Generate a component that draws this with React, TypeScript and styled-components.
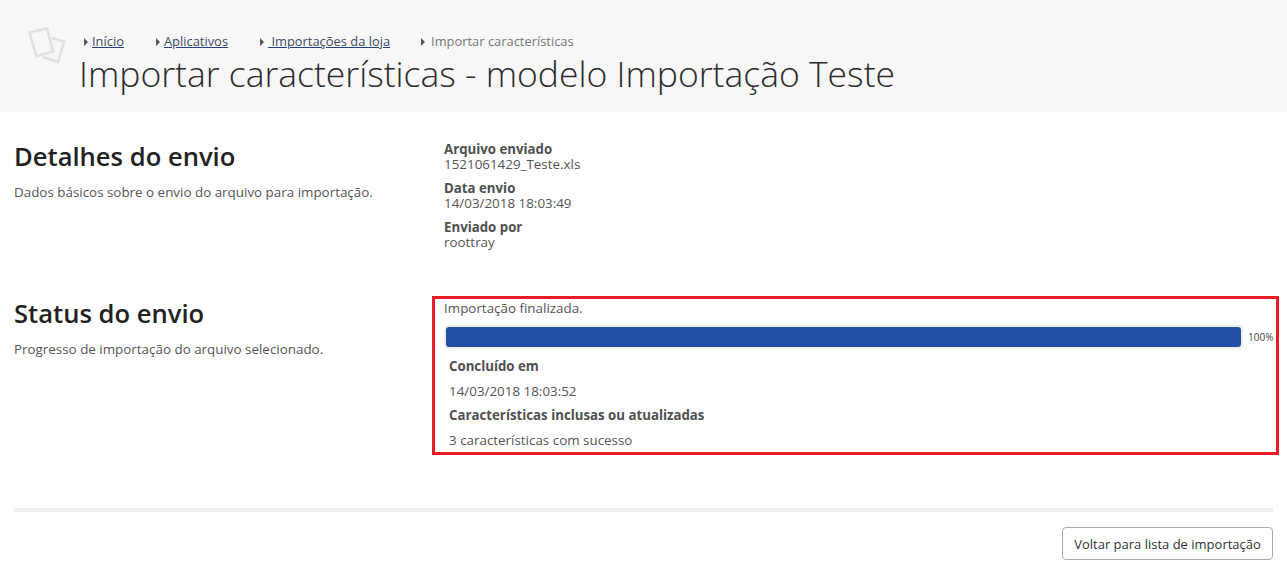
import styled, { createGlobalStyle } from 'styled-components';

const GlobalStyle = createGlobalStyle`
  html, body {
    margin: 0;
    padding: 0;
    background: #fff;
    font-family: 'Open Sans', 'Noto Sans', sans-serif;
    color: #555;
  }
`;

const crumbs = [
  { label: 'Início', gap: 32 },
  { label: 'Aplicativos', gap: 32 },
  { label: ' Importações da loja', gap: 31 },
];

const App = () => (
  <Page>
    <GlobalStyle />
    <Header>
      <PageIcon width="40" height="40" viewBox="0 0 40 40" fill="none">
        <path d="M2.5 6.5 20 2.5 26 25.5 9.5 30.5Z" stroke="#e0e0e0" strokeWidth="2.5" />
        <path d="M25 12 37 15.5 31 36 16 31" stroke="#e0e0e0" strokeWidth="2.5" />
      </PageIcon>
      <Breadcrumb>
        {crumbs.map(crumb => (
          <Crumb key={crumb.label} $gap={crumb.gap}>
            <Arrow />
            <CrumbLink href="#">{crumb.label}</CrumbLink>
          </Crumb>
        ))}
        <Crumb $gap={0}>
          <Arrow />
          <CurrentCrumb>Importar características</CurrentCrumb>
        </Crumb>
      </Breadcrumb>
      <Title>Importar características - modelo Importação Teste</Title>
    </Header>

    <Section $height={157}>
      <Intro>
        <SectionTitle>Detalhes do envio</SectionTitle>
        <SectionText>Dados básicos sobre o envio do arquivo para importação.</SectionText>
      </Intro>
      <Details>
        <DetailLabel>Arquivo enviado</DetailLabel>
        <DetailValue>1521061429_Teste.xls</DetailValue>
        <DetailLabel>Data envio</DetailLabel>
        <DetailValue>14/03/2018 18:03:49</DetailValue>
        <DetailLabel>Enviado por</DetailLabel>
        <DetailValue>roottray</DetailValue>
      </Details>
    </Section>

    <Section $height={159}>
      <Intro>
        <SectionTitle>Status do envio</SectionTitle>
        <SectionText>Progresso de importação do arquivo selecionado.</SectionText>
      </Intro>
      <StatusBox>
        <StatusText>Importação finalizada.</StatusText>
        <ProgressRow>
          <ProgressTrack>
            <ProgressFill style={{ width: '100%' }} />
          </ProgressTrack>
          <ProgressValue>100%</ProgressValue>
        </ProgressRow>
        <ResultLine $bold>Concluído em</ResultLine>
        <ResultLine>14/03/2018 18:03:52</ResultLine>
        <ResultLine $bold>Características inclusas ou atualizadas</ResultLine>
        <ResultLine>3 características com sucesso</ResultLine>
      </StatusBox>
    </Section>

    <Footer>
      <BackButton type="button">Voltar para lista de importação</BackButton>
    </Footer>
  </Page>
);

const Page = styled.div`
  width: 1287px;
  height: 569px;
  overflow: hidden;
`;

const Header = styled.header`
  position: relative;
  height: 112px;
  box-sizing: border-box;
  padding: 33px 0 0 80px;
  margin-bottom: 27px;
  background: #f7f7f7;
`;

const PageIcon = styled.svg`
  position: absolute;
  left: 27px;
  top: 26px;
`;

const Breadcrumb = styled.nav`
  display: flex;
  align-items: center;
  height: 17px;
  padding-left: 4px;
  font-size: 12.9px;
  line-height: 17px;
`;

const Crumb = styled.span<{ $gap: number }>`
  display: inline-flex;
  align-items: center;
  margin-right: ${props => props.$gap}px;
`;

const Arrow = styled.i`
  width: 0;
  height: 0;
  margin-right: 4px;
  border-top: 4px solid transparent;
  border-bottom: 4px solid transparent;
  border-left: 4px solid #555;
`;

const CrumbLink = styled.a`
  color: #3d4a68;
  text-decoration: underline;
  text-decoration-color: #23408f;
  white-space: pre;
`;

const CurrentCrumb = styled.span`
  margin-left: 2px;
  color: #777;
`;

const Title = styled.h1`
  margin: -1px 0 0 -1px;
  font-size: 35.5px;
  font-weight: 300;
  line-height: 48px;
  color: #2b2b2b;
  white-space: nowrap;
`;

const Section = styled.section<{ $height: number }>`
  display: flex;
  height: ${props => props.$height}px;
  padding: 0 8px 0 14px;
`;

const Intro = styled.div`
  flex: 0 0 418px;
  padding-top: 1px;
`;

const SectionTitle = styled.h2`
  margin: 0 0 9px;
  font-size: 25.6px;
  font-weight: 600;
  line-height: 34px;
  color: #222;
`;

const SectionText = styled.p`
  margin: 0;
  font-size: 13.4px;
  line-height: 18px;
  color: #555;
`;

const Details = styled.div`
  display: flex;
  flex-direction: column;
  padding: 3px 0 0 12px;
  font-size: 13.4px;
  line-height: 15px;
`;

const DetailLabel = styled.strong`
  font-size: 13.25px;
  font-weight: 700;
  color: #505050;
`;

const DetailValue = styled.span`
  margin-bottom: 9px;
  color: #555;
`;

const StatusBox = styled.div`
  flex: 1;
  box-sizing: border-box;
  height: 159px;
  padding: 0 3px 0 9px;
  border: 3px solid #ed1c24;
  font-size: 13.4px;
`;

const StatusText = styled.div`
  height: 26px;
  line-height: 18px;
  color: #555;
`;

const ProgressRow = styled.div`
  display: flex;
  align-items: center;
  margin-bottom: 5px;
`;

const ProgressTrack = styled.div`
  flex: 0 0 799px;
  box-sizing: border-box;
  height: 24px;
  padding: 2px;
  border-radius: 4px;
  background: #eee;
`;

const ProgressFill = styled.div`
  height: 100%;
  border-radius: 3px;
  background: #2450a4;
`;

const ProgressValue = styled.span`
  margin-left: 5px;
  font-size: 10px;
  color: #444;
`;

const ResultLine = styled.div<{ $bold?: boolean }>`
  height: 24.7px;
  padding-left: 5px;
  font-size: ${props => (props.$bold ? 13.25 : 13.4)}px;
  font-weight: ${props => (props.$bold ? 700 : 400)};
  line-height: 24px;
  color: ${props => (props.$bold ? '#505050' : '#555')};
`;

const Footer = styled.footer`
  display: flex;
  justify-content: flex-end;
  margin: 53px 14px 0;
  padding-top: 15px;
  border-top: 4px solid #eee;
`;

const BackButton = styled.button`
  width: 211px;
  height: 33px;
  padding: 0;
  border: 1px solid #aaa;
  border-radius: 4px;
  background: #fff;
  font-family: inherit;
  font-size: 13px;
  color: #333;
`;

export default App;
